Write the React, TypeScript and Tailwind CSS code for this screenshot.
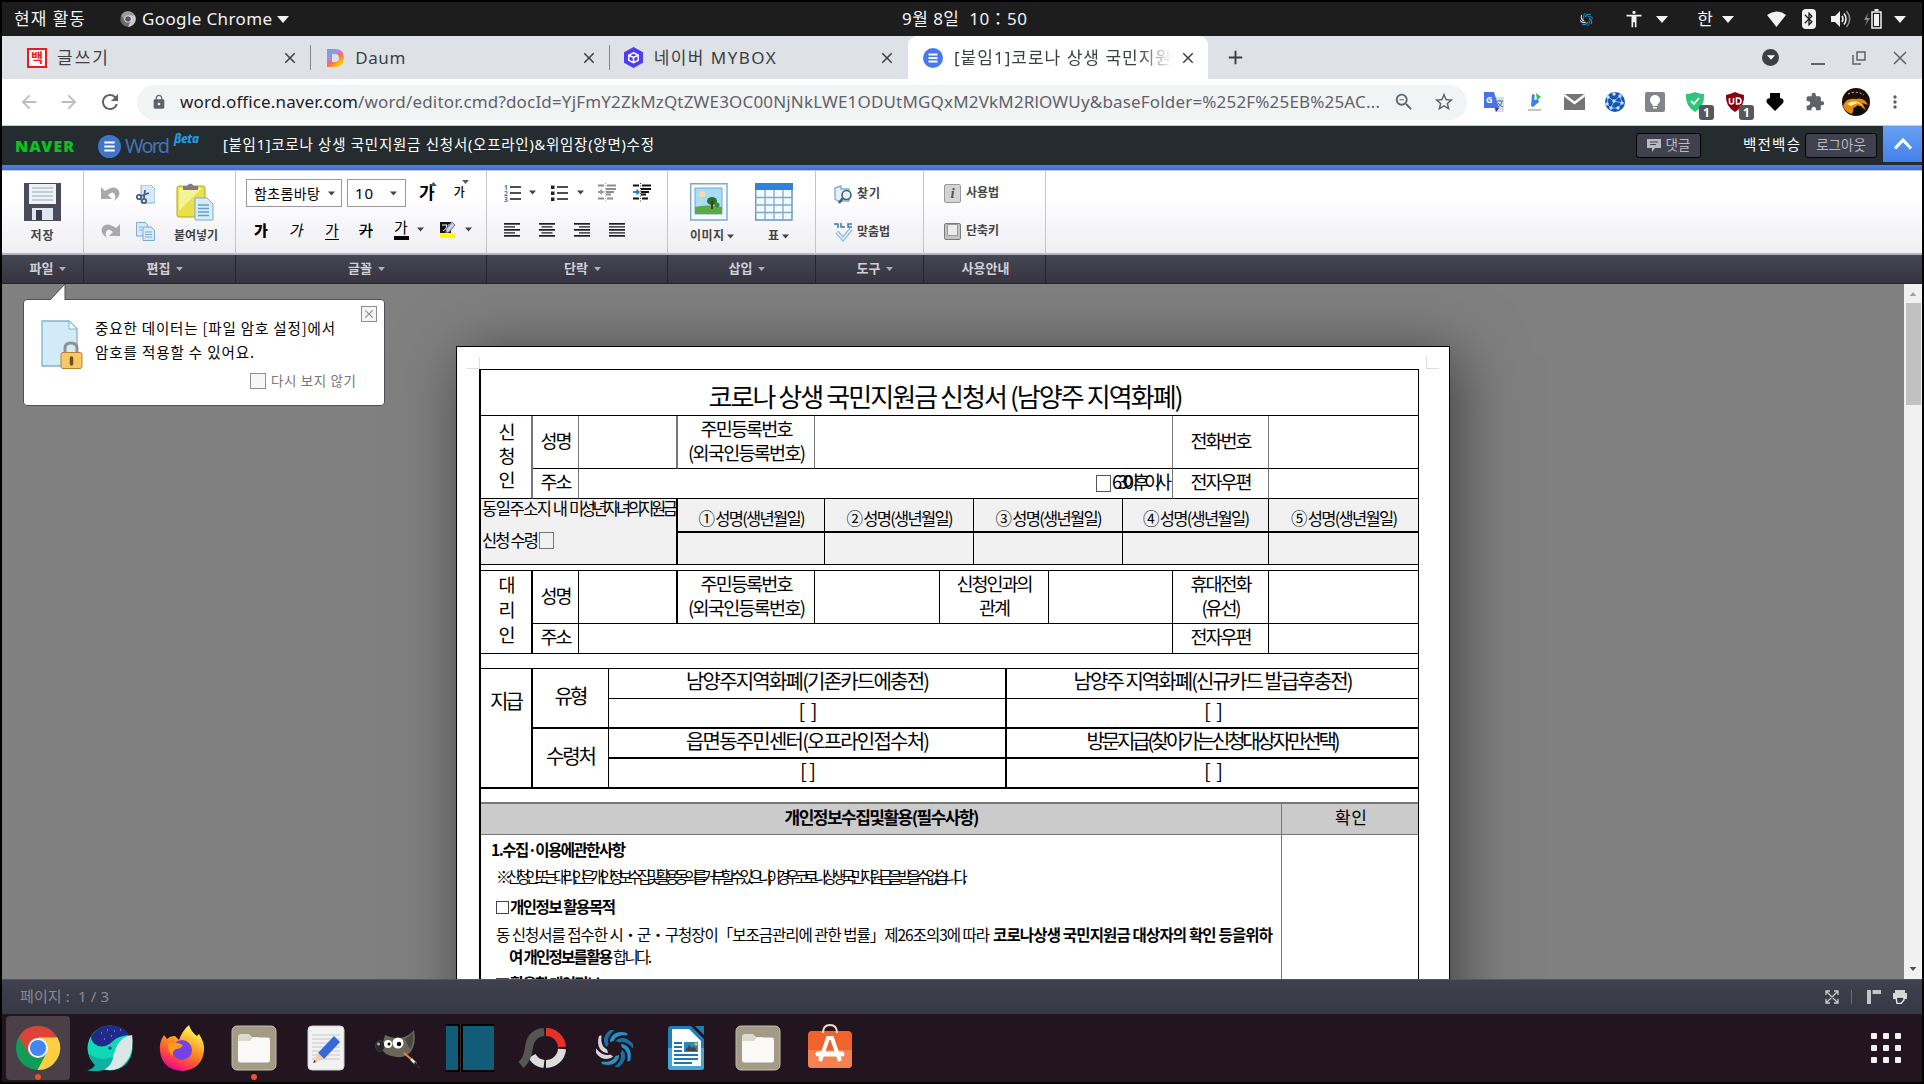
import { useLayoutEffect, useRef, useState } from "react";
import type { ReactNode } from "react";
import {
  MdArrowBack,
  MdArrowForward,
  MdRefresh,
  MdLock,
  MdStarBorder,
  MdExtension,
  MdMoreVert,
  MdBluetooth,
  MdClose,
  MdAdd,
  MdAccessibility,
  MdZoomOut,
} from "react-icons/md";

// Text squeezed or stretched to a given width, like a justified word processor line
function Fit({ w, children, className = "" }: { w: number; children: string; className?: string }) {
  const ref = useRef<HTMLSpanElement>(null);
  const [spacing, setSpacing] = useState(0);

  useLayoutEffect(() => {
    const el = ref.current;
    if (!el) return;
    el.style.letterSpacing = "0px";
    const natural = el.getBoundingClientRect().width;
    const next = (w - natural) / Math.max(1, children.length - 1);
    el.style.letterSpacing = next + "px";
    setSpacing(next);
  }, [w, children]);

  return (
    <span className={`inline-block shrink-0 whitespace-pre ${className}`} style={{ width: w }}>
      <span ref={ref} className="inline-block" style={{ letterSpacing: spacing }}>
        {children}
      </span>
    </span>
  );
}

function Caret({ className = "" }: { className?: string }) {
  return (
    <svg viewBox="0 0 12 7" className={`shrink-0 ${className}`}>
      <path d="M0 0H12L6 7Z" fill="currentColor" />
    </svg>
  );
}

function ChromeGlyph({ gray = false, className = "" }: { gray?: boolean; className?: string }) {
  const c = gray ? ["#9b9b9b", "#6b6b6b", "#c9c9c9", "#555"] : ["#db4437", "#0f9d58", "#ffcd40", "#4285f4"];
  return (
    <svg viewBox="0 0 48 48" className={className}>
      <circle cx="24" cy="24" r="23" fill={c[1]} />
      <path d="M24 24L4 12.500A23 23 0 0 1 44 13H24Z" fill={c[0]} />
      <path d="M24 13H44.300A23 23 0 0 1 23.500 47L33 29Z" fill={c[2]} />
      <path d="M4 12.500L14 30L24 13Z" fill={c[0]} />
      <circle cx="24" cy="24" r="10.500" fill="#f1f1f1" />
      <circle cx="24" cy="24" r="8.400" fill={c[3]} />
    </svg>
  );
}

function Swirl({ className = "" }: { className?: string }) {
  return (
    <svg viewBox="0 0 40 40" className={className}>
      {[0, 45, 90, 135, 180, 225, 270, 315].map((a) => (
        <path
          key={a}
          d="M15 13C15 6 22 0 33 3C34 4 34 5 34 6C27 5 21 7 19 12Z"
          fill={a >= 225 && a <= 270 ? "#d5d5da" : a % 90 ? "#1b6f9f" : "#2a8fc4"}
          transform={`rotate(${a} 20 20)`}
        />
      ))}
    </svg>
  );
}

function TopBar() {
  return (
    <div className="flex h-[34px] items-center bg-[#1d1d1d] text-[18px] text-[#f2f2f2]">
      <Fit w={71} className="ml-[12px] text-[17px]">현재 활동</Fit>
      <ChromeGlyph gray className="ml-[35px] h-[16px] w-[16px]" />
      <Fit w={130} className="ml-[6px] text-[17px]">Google Chrome</Fit>
      <Caret className="ml-[5px] h-[7px] w-[12px]" />
      <Fit w={125} className="ml-[613px] text-[17px]">9월 8일  10：50</Fit>
      <div className="flex-1" />
      <Swirl className="mr-[31px] h-[13px] w-[13px]" />
      <MdAccessibility className="mr-[12px] h-[20px] w-[20px]" />
      <Caret className="mr-[29px] h-[7px] w-[12px]" />
      <span className="mr-[9px] text-[17px]">한</span>
      <Caret className="mr-[33px] h-[7px] w-[12px]" />
      <svg viewBox="0 0 19 16" className="mr-[16px] h-[16px] w-[19px]">
        <path d="M0 4Q9.500 -3 19 4L9.500 16Z" fill="#f2f2f2" />
      </svg>
      <span className="mr-[15px] flex h-[20px] w-[14px] items-center justify-center rounded-sm bg-[#f2f2f2] text-[#1d1d1d]">
        <MdBluetooth className="h-[16px] w-[16px] shrink-0" />
      </span>
      <svg viewBox="0 0 20 18" className="mr-[13px] h-[18px] w-[20px]" fill="none" stroke="#f2f2f2" strokeWidth="1.600">
        <path d="M0 6H4L9 1V17L4 12H0Z" fill="#f2f2f2" stroke="none" />
        <path d="M11 6Q13 9 11 12M13 3.500Q17 9 13 14.500" />
        <path d="M15.500 1Q22 9 15.500 17" stroke="#8a8a8a" />
      </svg>
      <svg viewBox="0 0 18 20" className="mr-[12px] h-[20px] w-[18px]">
        <path d="M4 4L0 11H3L1 17L6 9H3Z" fill="#8a8a8a" />
        <path d="M8 3H17V19H8Z" fill="none" stroke="#f2f2f2" strokeWidth="1.500" />
        <path d="M10 5H15V17H10ZM10.500 0H14.500V2H10.500Z" fill="#f2f2f2" />
      </svg>
      <Caret className="mr-[16px] h-[7px] w-[12px]" />
    </div>
  );
}

function DocGlyph({ className = "" }: { className?: string }) {
  return (
    <svg viewBox="0 0 20 20" className={className}>
      <circle cx="10" cy="10" r="10" fill="currentColor" />
      <path d="M5.500 6.500H14.500M5.500 10H14.500M5.500 13.500H14.500" stroke="#fff" strokeWidth="1.800" />
    </svg>
  );
}

function Tab({ icon, children, sep }: { icon: ReactNode; children: ReactNode; sep?: boolean }) {
  return (
    <div className="flex h-full w-[299px] items-center pl-[14px] text-[#3c4043]">
      <span className="flex w-[20px] justify-center">{icon}</span>
      <span className="ml-[10px] flex-1">{children}</span>
      <MdClose className="mr-[11px] h-[18px] w-[18px] text-[#3c4043]" />
      <span className={`h-[25px] w-px ${sep ? "bg-[#85888d]" : ""}`} />
    </div>
  );
}

function TabStrip() {
  return (
    <div className="flex h-[43px] items-center bg-[#dee1e6] text-[17px]">
      <div className="flex h-full w-[906px] pl-[11px]">
        <Tab
          sep
          icon={
            <span className="flex h-[20px] w-[20px] items-center justify-center border-2 border-[#f01818] bg-white text-[13px] leading-none font-bold text-[#f01818]">
              백
            </span>
          }
        >
          <Fit w={51}>글쓰기</Fit>
        </Tab>
        <Tab
          sep
          icon={
            <svg viewBox="0 0 17 18" className="h-[18px] w-[17px]">
              <defs>
                <linearGradient id="daum" x1="0" y1="0" x2="0.800" y2="1">
                  <stop offset="0" stopColor="#3fb6f5" />
                  <stop offset="0.350" stopColor="#a88be8" />
                  <stop offset="0.600" stopColor="#ff6a5c" />
                  <stop offset="0.850" stopColor="#ffc400" />
                </linearGradient>
              </defs>
              <path d="M0 0H8Q17 0 17 9Q17 18 8 18H0Z" fill="url(#daum)" />
              <path d="M5 5H8Q12 5 12 9Q12 13 8 13H5Z" fill="#dee1e6" />
            </svg>
          }
        >
          <Fit w={50}>Daum</Fit>
        </Tab>
        <Tab
          icon={
            <svg viewBox="0 0 20 22" className="h-[21px] w-[19px]">
              <path d="M10 0L20 5.500V16.500L10 22L0 16.500V5.500Z" fill="#4f3df5" />
              <path d="M10 6L15 8.500V14L10 16.500L5 14V8.500ZM5 8.500L10 11L15 8.500M10 11V16.500" fill="none" stroke="#fff" strokeWidth="1.600" />
            </svg>
          }
        >
          <Fit w={122}>네이버 MYBOX</Fit>
        </Tab>
      </div>
      <div className="flex h-full w-[300px] items-center rounded-t-[9px] bg-white pl-[15px] text-[#3c4043]">
        <DocGlyph className="h-[20px] w-[20px] text-[#4678f0]" />
        <span className="ml-[11px] w-[218px] mask-r-from-85%">
          <Fit w={217}>[붙임1]코로나 상생 국민지원</Fit>
        </span>
        <MdClose className="ml-[7px] h-[18px] w-[18px]" />
      </div>
      <MdAdd className="ml-[16px] h-[23px] w-[23px] text-[#3c4043]" />
      <div className="flex-1" />
      <span className="mr-[32px] flex h-[17px] w-[17px] items-center justify-center rounded-full bg-[#3c4043] text-white">
        <Caret className="h-[5px] w-[8px]" />
      </span>
      <span className="mt-[12px] mr-[27px] h-[2px] w-[14px] bg-[#5f6368]" />
      <svg viewBox="0 0 14 14" className="mr-[27px] h-[14px] w-[14px]" fill="none" stroke="#5f6368" strokeWidth="1.500">
        <path d="M5 1H13V9H5ZM1 4V13H9" />
      </svg>
      <svg viewBox="0 0 14 14" className="mr-[15px] h-[14px] w-[14px]" stroke="#5f6368" strokeWidth="1.500">
        <path d="M1 1L13 13M13 1L1 13" />
      </svg>
    </div>
  );
}

function CountBadge() {
  return (
    <span className="absolute -right-[9px] -bottom-[8px] flex h-[15px] w-[15px] items-center justify-center rounded-[3px] bg-[#55595c] text-[12px] leading-none font-bold text-white">
      1
    </span>
  );
}

function AddressBar() {
  return (
    <div className="flex h-[47px] items-center border-b border-[#c9cccf] bg-white text-[#5f6368]">
      <MdArrowBack className="ml-[16px] h-[22px] w-[22px] text-[#babcbe]" />
      <MdArrowForward className="ml-[18px] h-[22px] w-[22px] text-[#babcbe]" />
      <MdRefresh className="ml-[18px] h-[24px] w-[24px]" />
      <div className="ml-[15px] flex h-[35px] w-[1330px] items-center rounded-full bg-[#f1f3f4] text-[17px]">
        <MdLock className="ml-[14px] h-[16px] w-[16px]" />
        <Fit w={178} className="ml-[13px] text-[#202124]">word.office.naver.com</Fit>
        <Fit w={1022}>/word/editor.cmd?docId=YjFmY2ZkMzQtZWE3OC00NjNkLWE1ODUtMGQxM2VkM2RlOWUy&baseFolder=%252F%25EB%25AC...</Fit>
        <MdZoomOut className="ml-[13px] h-[22px] w-[22px]" />
        <MdStarBorder className="ml-[18px] h-[22px] w-[22px]" />
      </div>
      <div className="ml-[17px] flex items-center gap-[20px]">
        <svg viewBox="0 0 20 20" className="h-[20px] w-[20px]">
          <path d="M7 5H20V20H11Z" fill="#dadce0" />
          <path d="M0 0H10L15 16H0Z" fill="#4a72e8" />
          <path d="M11 16H15L12 20Z" fill="#3b27b0" />
          <path d="M13 9H19M16 8V9M14 15Q18 13 18 9M14 11Q16 14 19 15" stroke="#4b7aa0" fill="none" />
          <text x="2" y="11" fontSize="9" fontWeight="700" fill="#fff">G</text>
        </svg>
        <svg viewBox="0 0 20 20" className="h-[20px] w-[20px]">
          <path d="M8 2L11 3L10 8L14 7L15 10L9 15L7 14Z" fill="#3f7df0" />
          <path d="M12 1L17 5L13 8Z" fill="#2dbd4c" />
          <path d="M4 18H17" stroke="#c4c4c4" strokeWidth="2" />
        </svg>
        <svg viewBox="0 0 21 16" className="h-[16px] w-[21px]">
          <path d="M0 0H21V16H0Z" fill="#757575" />
          <path d="M0 1L10.500 9L21 1" fill="none" stroke="#fff" strokeWidth="2.500" />
        </svg>
        <svg viewBox="0 0 20 20" className="h-[20px] w-[20px]">
          <circle cx="10" cy="10" r="10" fill="#2350b0" />
          <path d="M3 5L9 9L15 4L17 11L9 9L6 16L13 16L17 11M3 5L2 12L6 16" stroke="#4fc8f5" fill="none" />
          {[[3, 5], [9, 9], [15, 4], [17, 11], [6, 16], [13, 16], [2, 12], [9, 2]].map(([x, y]) => (
            <circle key={`${x}-${y}`} cx={x} cy={y} r="1.700" fill="#b9e8ff" />
          ))}
        </svg>
        <span className="flex h-[20px] w-[20px] items-center justify-center rounded-[2px] bg-[#80868b]">
          <svg viewBox="0 0 10 14" className="h-[14px] w-[10px]" fill="#fff">
            <circle cx="5" cy="5" r="5" />
            <path d="M2.500 8H7.500V11H2.500ZM3 12H7V13.500H3Z" />
          </svg>
        </span>
        <span className="relative h-[20px] w-[20px]">
          <svg viewBox="0 0 20 20" className="h-[20px] w-[20px]">
            <path d="M1 2Q6 2 10 0Q14 2 19 2Q20 14 10 20Q0 14 1 2Z" fill="#2fc57a" />
            <path d="M6 9L9 12L14 6" stroke="#fff" strokeWidth="1.800" fill="none" />
          </svg>
          <CountBadge />
        </span>
        <span className="relative h-[20px] w-[20px]">
          <svg viewBox="0 0 20 20" className="h-[20px] w-[20px]">
            <path d="M1 3Q6 2 10 0Q14 2 19 3Q20 14 10 20Q0 14 1 3Z" fill="#8a0010" />
            <path d="M4.500 6V10Q4.500 12 6.500 12Q8.500 12 8.500 10V6M11.500 6V12H13Q16 12 16 9Q16 6 13 6Z" stroke="#fff" strokeWidth="1.600" fill="none" />
          </svg>
          <CountBadge />
        </span>
        <svg viewBox="0 0 20 20" className="h-[20px] w-[20px]">
          <path d="M5 1H15V6Q20 7 18 11L10 19L2 11Q0 7 5 6Z" fill="#000" />
        </svg>
        <MdExtension className="h-[22px] w-[20px]" />
        <svg viewBox="0 0 28 28" className="-mx-[3px] h-[28px] w-[28px]">
          <circle cx="14" cy="14" r="14" fill="#1b0f06" />
          <path d="M1 18Q4 9 14 11Q22 9 26 17L20 15L24 22L16 17L12 20L10 26Q3 24 1 18Z" fill="#e88a10" />
          <path d="M5 16Q10 12 16 14L22 18L15 15L9 18Z" fill="#fff19a" />
          <path d="M6 6Q14 2 22 7" stroke="#d8d8d8" strokeDasharray="2 2" fill="none" />
          <path d="M11 20L19 18L22 24L14 27Z" fill="#0a0a0a" />
        </svg>
        <MdMoreVert className="-ml-[2px] h-[24px] w-[20px]" />
      </div>
    </div>
  );
}

function NaverHeader() {
  return (
    <>
      <div className="flex h-[39px] items-center bg-[#252c2f]">
        <Fit w={59} className="ml-[13px] text-[16px] font-black text-[#06c51c]">NAVER</Fit>
        <DocGlyph className="mt-[1px] ml-[24px] h-[23px] w-[23px] text-[#4274c8]" />
        <Fit w={45} className="ml-[4px] text-[20px] text-[#4472b8]">Word</Fit>
        <Fit w={25} className="-mt-[14px] ml-[4px] text-[12px] font-bold text-[#1ea2ea] italic">βeta</Fit>
        <Fit w={431} className="-mt-[2px] ml-[24px] text-[14.5px] text-white">[붙임1]코로나 상생 국민지원금 신청서(오프라인)&위임장(양면)수정</Fit>
        <div className="flex-1" />
        <span className="mr-[42px] flex h-[25px] w-[65px] items-center justify-center gap-[5px] rounded-[3px] border border-black bg-[#3f424e] text-[13.5px] text-[#b9babf]">
          <svg viewBox="0 0 14 13" className="h-[13px] w-[14px]">
            <path d="M0 0H14V9H8L5 13V9H0Z" fill="#b9babf" />
            <path d="M3 3H11M3 5.500H9" stroke="#3f424e" />
          </svg>
          댓글
        </span>
        <Fit w={57} className="-mt-[2px] text-[14.5px] text-white">백전백승</Fit>
        <span className="mr-[6px] ml-[5px] flex h-[25px] w-[72px] items-center justify-center rounded-[3px] border border-black bg-[#3f424e] text-[13.5px] text-[#b9babf]">
          로그아웃
        </span>
        <span className="mb-[3px] flex h-[36px] w-[39px] items-center justify-center bg-linear-to-b from-[#66a0f4] to-[#4481ea]">
          <svg viewBox="0 0 20 12" className="h-[12px] w-[20px]">
            <path d="M2 10.500L10 2L18 10.500" fill="none" stroke="#fff" strokeWidth="3" />
          </svg>
        </span>
      </div>
      <div className="h-[6px] border-b border-[#c4ccdc] bg-linear-to-b from-[#4b83ec] to-[#3d70cf]" />
    </>
  );
}

function Lines({ widths, align = "left" }: { widths: number[]; align?: "left" | "center" | "right" }) {
  return (
    <svg viewBox="0 0 16 16" className="h-[16px] w-[16px] shrink-0">
      {widths.map((w, i) => (
        <rect
          key={i}
          x={align === "left" ? 0 : align === "right" ? 16 - w : (16 - w) / 2}
          y={1 + i * 3}
          width={w}
          height="1.700"
          fill={i % 2 ? "#555" : "#1c1c1c"}
        />
      ))}
    </svg>
  );
}

function ListGlyph({ numbered = false }: { numbered?: boolean }) {
  return (
    <svg viewBox="0 0 17 18" className="h-[18px] w-[17px]">
      {[3, 9, 15].map((y, i) => (
        <g key={y}>
          <path d={`M6 ${y}H17`} stroke="#222" strokeWidth="1.600" />
          {numbered ? (
            <text x="0" y={y + 2.500} fontSize="6.500" fontWeight="700" fill="#1878c8">{i + 1}</text>
          ) : (
            <path d={`M0 ${y - 1.500}H3.500V${y + 2}H0Z`} fill="#222" />
          )}
        </g>
      ))}
    </svg>
  );
}

function IndentGlyph({ out = false }: { out?: boolean }) {
  return (
    <svg viewBox="0 0 18 19" className="h-[19px] w-[18px]">
      <path d="M0 2.500H6M9 2.500H18M8 6H18M8 9H16M8 11.500H13M0 15.500H6M9 15.500H15" stroke={out ? "#8c8c8c" : "#111"} strokeWidth="1.900" />
      <path d="M7.500 0V19" stroke={out ? "#aaa" : "#444"} strokeDasharray="1 1.500" />
      <path d={out ? "M0 9L4 6V12Z" : "M7 9L3.500 5.500V12.500Z"} fill={out ? "#999" : "#1878d8"} />
      <path d="M0 9H6" stroke={out ? "#999" : "#1878d8"} strokeWidth="1.800" />
    </svg>
  );
}

function Group({ w, label, caret = true, children }: { w: string; label: string; caret?: boolean; children: ReactNode }) {
  return (
    <div className={`${w} shrink-0`}>
      <div className="h-[83px] border-r border-[#c4c4cc]">{children}</div>
      <div
        className={`mt-px flex h-[29px] items-center justify-center gap-[6px] border-r border-[#25242d] pb-px text-[13px] font-bold text-[#d0d0d6] ${caret ? "pl-[11px]" : "pl-[2px]"}`}
      >
        {label}
        {caret && <Caret className="h-[4px] w-[7px] text-[#b0b0b8]" />}
      </div>
    </div>
  );
}

const ga = "flex h-[20px] w-[22px] items-center justify-center text-[15px] leading-none text-black";

function Ribbon() {
  return (
    <div className="flex h-[113px] bg-[linear-gradient(to_bottom,#fff_0,#fff_25px,#eeeef4_82px,#b4b4be_82px,#b4b4be_84px,#464553_84px,#35343f_112px,#24232c_112px)] text-[12px] font-bold text-[#444]">
      <Group w="w-[82px]" label="파일">
        <div className="flex flex-col items-center pt-[12px] pr-px">
          <svg viewBox="0 0 37 38" className="h-[38px] w-[37px]">
            <path d="M0 0H37V38H0Z" fill="#4a4a5a" />
            <path d="M5 1H32V21H5Z" fill="#eef2f5" />
            <path d="M8 5H29M8 9H29M8 13H29M8 17H29" stroke="#b5c4cc" strokeWidth="1.500" />
            <path d="M8 25H29V37H8Z" fill="#dfe6f0" />
            <path d="M12 27H18V37H12Z" fill="#3a3a48" />
          </svg>
          <Fit w={23} className="mt-[5px] leading-[20px]">저장</Fit>
        </div>
      </Group>
      <Group w="w-[152px]" label="편집">
        <div className="flex pt-[12px] pl-[17px]">
          <div className="flex w-[19px] flex-col gap-[22px] pt-[3px] text-[#a9a9ad]">
            <svg viewBox="0 0 19 15" className="h-[15px] w-[19px]">
              <path d="M0 1V13H11L7 9Q12 4 14 9Q15 12 13 15Q20 10 18 5Q14 -2 4 5Z" fill="currentColor" />
            </svg>
            <svg viewBox="0 0 19 15" className="h-[15px] w-[19px] -scale-x-100">
              <path d="M0 1V13H11L7 9Q12 4 14 9Q15 12 13 15Q20 10 18 5Q14 -2 4 5Z" fill="currentColor" />
            </svg>
          </div>
          <div className="ml-[16px] flex w-[19px] flex-col gap-[18px] pt-[2px]">
            <svg viewBox="0 0 19 19" className="h-[19px] w-[19px]">
              <path d="M5 0H15L19 4V18H5Z" fill="#d5eafa" stroke="#8ab3d3" />
              <g fill="none" stroke="#46607c" strokeWidth="1.800">
                <circle cx="3" cy="12" r="2.200" />
                <circle cx="8" cy="16" r="2.200" />
                <path d="M5 11L13 8M8 13L9 5" />
              </g>
            </svg>
            <svg viewBox="0 0 19 19" className="h-[19px] w-[19px]" fill="#d5eafa" stroke="#7fabd0">
              <path d="M.5 .5H9L12 3V14H.5Z" />
              <path d="M7 5H15L18.500 8V18.500H7Z" />
              <path d="M9 10H16M9 12.500H16M9 15H16M3 5H6M3 8H6" />
            </svg>
          </div>
          <div className="ml-[19px] flex w-[44px] flex-col items-center">
            <svg viewBox="0 0 38 38" className="-ml-[2px] h-[38px] w-[38px]">
              <rect x="1" y="3" width="28" height="31" rx="2" fill="#e8e04a" stroke="#b3a52a" />
              <path d="M3 5L26 5L3 28Z" fill="#f6f29a" />
              <path d="M7 3H11Q14 -2 18 3H22V7H7Z" fill="#7d7d80" />
              <path d="M19 15H31L37 21V37H19Z" fill="#d8edfa" stroke="#7fabd0" />
              <path d="M22 22H33M22 25.500H33M22 29H33M22 32.500H33" stroke="#6a9cc8" strokeWidth="1.500" />
            </svg>
            <Fit w={44} className="mt-[5px] leading-[20px]">붙여넣기</Fit>
          </div>
        </div>
      </Group>
      <Group w="w-[251px]" label="글꼴">
        <div className="flex items-center pt-[8px] pl-[10px] text-black">
          <span className="flex h-[28px] w-[96px] items-center border border-[#98989e] bg-white pl-[7px] text-[14px] font-normal">
            <Fit w={66}>함초롬바탕</Fit>
            <Caret className="ml-[8px] h-[5px] w-[7px] text-[#444]" />
          </span>
          <span className="ml-[5px] flex h-[28px] w-[59px] items-center justify-between border border-[#98989e] bg-white pr-[8px] pl-[7px] text-[15px] font-normal">
            <Fit w={18}>10</Fit>
            <Caret className="h-[5px] w-[7px] text-[#444]" />
          </span>
          <span className="ml-[13px] flex items-start text-[17px] leading-[18px]">
            가<Caret className="-mt-[2px] -ml-[5px] h-[4px] w-[7px] rotate-180 text-[#555]" />
          </span>
          <span className="ml-[17px] flex items-start text-[12px] leading-[22px] font-medium">
            가<Caret className="-mt-[2px] -ml-[3px] h-[4px] w-[7px] text-[#555]" />
          </span>
        </div>
        <div className="flex pt-[13px] pl-[14px] font-medium">
          <span className={`${ga} font-black`}>가</span>
          <span className={`${ga} ml-[14px] -skew-x-12 font-normal`}>가</span>
          <span className={`${ga} ml-[13px] font-normal underline underline-offset-3`}>가</span>
          <span className={`${ga} ml-[12px] line-through`}>가</span>
          <span className={`${ga} ml-[13px] flex-col font-normal`}>
            가<span className="mt-[1px] h-[4px] w-[15px] shrink-0 bg-black" />
          </span>
          <Caret className="mt-[7px] ml-[5px] h-[5px] w-[7px] text-[#444]" />
          <svg viewBox="0 0 16 17" className="mt-[1px] ml-[16px] h-[17px] w-[16px]">
            <path d="M0 1H11V12H0Z" fill="#111118" />
            <path d="M2 4H7Q7 8 3 10M9 3V11" stroke="#fff" fill="none" />
            <path d="M6 8L12 1L15 4L9 11L6 12Z" fill="#c8cce0" stroke="#6a7088" />
            <path d="M0 12H15V17H0Z" fill="#ff0" />
          </svg>
          <Caret className="mt-[7px] ml-[9px] h-[5px] w-[7px] text-[#444]" />
        </div>
      </Group>
      <Group w="w-[181px]" label="단락">
        <div className="flex items-center pt-[12px] pl-[17px]">
          <ListGlyph numbered />
          <Caret className="ml-[8px] h-[5px] w-[7px]" />
          <span className="w-[15px]" />
          <ListGlyph />
          <Caret className="ml-[9px] h-[5px] w-[7px]" />
          <span className="w-[14px]" />
          <IndentGlyph out />
          <span className="w-[17px]" />
          <IndentGlyph />
        </div>
        <div className="flex gap-[19px] pt-[20px] pl-[17px]">
          <Lines widths={[16, 11, 16, 11, 16]} />
          <Lines widths={[16, 11, 16, 11, 16]} align="center" />
          <Lines widths={[16, 11, 16, 11, 16]} align="right" />
          <Lines widths={[16, 16, 16, 16, 16]} />
        </div>
      </Group>
      <Group w="w-[148px]" label="삽입">
        <div className="flex pt-[12px] pl-[22px]">
          <div className="flex w-[44px] flex-col">
            <svg viewBox="0 0 38 38" className="h-[38px] w-[38px]">
              <path d="M.7 .7H37V37H.7Z" fill="#f5fbff" stroke="#7fa8cc" strokeWidth="1.400" />
              <path d="M5 5H32V31H5Z" fill="#a9dcf6" stroke="#7fa8cc" />
              <circle cx="12" cy="11" r="3" fill="#ffd9a0" />
              <path d="M5 24Q16 21 32 24V31H5Z" fill="#58ab45" />
              <ellipse cx="22" cy="18" rx="5" ry="4" fill="#2d6f22" />
              <circle cx="27" cy="22" r="2.500" fill="#3a8a2c" />
              <path d="M21 18H23V26H21Z" fill="#4a3a1a" />
            </svg>
            <span className="mt-[5px] flex items-center gap-[3px] leading-[20px]">
              <Fit w={34}>이미지</Fit>
              <Caret className="h-[5px] w-[7px]" />
            </span>
          </div>
          <div className="ml-[21px] flex w-[38px] flex-col items-center">
            <svg viewBox="0 0 38 38" className="h-[38px] w-[38px]">
              <path d="M.7 .7H37V37H.7Z" fill="#f2f9ff" stroke="#6a96c0" strokeWidth="1.400" />
              <path d="M0 0H38V7H0Z" fill="#2f82dc" />
              <path d="M0 14.500H38M0 22H38M0 29.500H38M10 7V38M19 7V38M28 7V38" stroke="#7fa8cc" strokeWidth="1.300" />
            </svg>
            <span className="mt-[5px] flex items-center gap-[3px] pl-[9px] leading-[20px]">
              표
              <Caret className="h-[5px] w-[7px]" />
            </span>
          </div>
        </div>
      </Group>
      <Group w="w-[108px]" label="도구">
        <div className="flex flex-col gap-[18px] pt-[13px] pl-[18px]">
          <span className="flex h-[20px] items-center gap-[4px]">
            <svg viewBox="0 0 19 19" className="h-[19px] w-[19px]" fill="#e2f1fb">
              <path d="M1 3L7 1V4H15V16H4L1 14Z" stroke="#7fb0d8" strokeWidth="1.400" />
              <circle cx="12.500" cy="10" r="4.500" stroke="#4a5a6a" strokeWidth="1.600" />
              <path d="M9 13L5 18" stroke="#4a5a6a" strokeWidth="2.500" />
            </svg>
            <Fit w={23}>찾기</Fit>
          </span>
          <span className="flex h-[20px] items-center gap-[4px]">
            <svg viewBox="0 0 19 19" className="h-[19px] w-[19px]" fill="none" stroke="#3f78a8" strokeWidth="1.500">
              <path d="M0 1H4V5M7 0V4H11M18 1H14V4H18" />
              <path d="M3 9L9 16L17 6" stroke="#8ab8dc" strokeWidth="4" />
              <path d="M3 9L9 16L17 6" stroke="#dceefa" strokeWidth="1.800" />
            </svg>
            <Fit w={33}>맞춤법</Fit>
          </span>
        </div>
      </Group>
      <Group w="w-[122px]" label="사용안내" caret={false}>
        <div className="flex flex-col gap-[18px] pt-[12px] pl-[20px]">
          <span className="flex h-[20px] items-center gap-[5px]">
            <span className="flex h-[19px] w-[17px] items-center justify-center rounded-[2px] border border-[#9a9a9a] bg-[#d4d4d4] font-[Liberation_Serif] text-[15px] leading-none font-bold text-[#555] italic">
              i
            </span>
            <Fit w={33}>사용법</Fit>
          </span>
          <span className="flex h-[20px] items-center gap-[5px]">
            <span className="flex h-[17px] w-[17px] items-start justify-center rounded-[2px] border border-[#7a7a7a] bg-[#c4c4c4]">
              <span className="h-[12px] w-[11px] border border-[#999] bg-[#ececec]" />
            </span>
            <Fit w={33}>단축키</Fit>
          </span>
        </div>
      </Group>
    </div>
  );
}

function Notice() {
  return (
    <div className="absolute top-[15px] left-[21px] h-[107px] w-[362px] rounded-[4px] border border-[#4f4e5c] bg-white text-[14.5px] text-black">
      <svg viewBox="0 0 16 17" className="absolute -top-[16px] left-[26px] h-[17px] w-[16px]">
        <path d="M0 16L15 0V17H0Z" fill="#fff" />
        <path d="M0 16L15 0V16" fill="none" stroke="#4f4e5c" />
      </svg>
      <span className="absolute top-[6px] right-[7px] flex h-[16px] w-[16px] items-center justify-center border border-[#8e8e8e] bg-[#f4f4f4] text-[#8e8e8e]">
        <MdClose className="h-[14px] w-[14px] shrink-0" />
      </span>
      <div className="flex pt-[17px] pl-[17px]">
        <svg viewBox="0 0 42 50" className="mt-[3px] h-[50px] w-[42px] shrink-0">
          <path d="M1 1H28L36 9V46H1Z" fill="#d3ebf8" stroke="#7fb2d2" strokeWidth="1.300" />
          <path d="M28 1V9H36Z" fill="#fff" stroke="#7fb2d2" />
          <path d="M24 33V28Q24 23 30 23Q36 23 36 28V33" fill="none" stroke="#909090" strokeWidth="3" />
          <rect x="20" y="32.500" width="21" height="16" rx="2" fill="#f7c868" stroke="#b7832f" />
          <path d="M30.500 38V44" stroke="#6b5020" strokeWidth="3.500" strokeLinecap="round" />
        </svg>
        <div className="-mt-px ml-[12px] leading-[24px]">
          <Fit w={240} className="block">중요한 데이터는 [파일 암호 설정]에서</Fit>
          <Fit w={159} className="block">암호를 적용할 수 있어요.</Fit>
        </div>
      </div>
      <div className="flex items-center pl-[226px] text-[13.5px] text-[#777]">
        <span className="mt-[2px] mr-[5px] h-[16px] w-[16px] border border-[#8e8e8e] bg-[#f7f7f7]" />
        <Fit w={85}>다시 보지 않기</Fit>
      </div>
    </div>
  );
}

// Form cell. Edges are right and bottom borders of the cell.
function Cell({ children, className = "" }: { children?: ReactNode; className?: string }) {
  return (
    <div className={`flex flex-col items-center justify-center border-black ${className}`}>
      <div className="-mt-[5px] ml-[2px] flex flex-col items-center">{children}</div>
    </div>
  );
}

function FormPage() {
  return (
    <div className="mt-[62px] ml-[454px] h-[700px] w-[994px] border border-black bg-white pt-[22px] pl-[22px] text-black shadow-[8px_8px_60px_rgba(0,0,0,0.5)]">
      <div className="relative h-px w-[950px]">
        <span className="absolute -top-[12px] -left-[12px] h-[12px] w-[13px] border-r border-b border-[#ddd]" />
        <span className="absolute -top-[12px] left-[947px] h-[12px] w-[13px] border-b border-l border-[#ddd]" />
      </div>
      <div className="-mt-px w-[940px] border-t border-r border-l-2 border-black text-[18.5px] leading-[24px]">
        <Cell className="h-[46px] border-b pt-[11px] text-[26px]">
          <Fit w={475} className="-ml-[9px]">코로나 상생 국민지원금 신청서 (남양주 지역화폐)</Fit>
        </Cell>

        <div className="grid h-[83px] grid-cols-[52px_46px_99px_137px_358px_96px_149px] grid-rows-[53px_30px]">
          <Cell className="row-span-2 border-r-2 border-b border-r-[#777] leading-[24px]">
            <span>신</span>
            <span>청</span>
            <span>인</span>
          </Cell>
          <Cell className="border-r border-b border-r-[#777]">
            <Fit w={32}>성명</Fit>
          </Cell>
          <Cell className="border-r-2 border-b border-r-[#777]" />
          <Cell className="border-r border-b border-r-[#777]">
            <Fit w={93}>주민등록번호</Fit>
            <Fit w={118}>(외국인등록번호)</Fit>
          </Cell>
          <Cell className="border-r border-b border-r-[#777]" />
          <Cell className="border-r border-b border-r-[#777]">
            <Fit w={62}>전화번호</Fit>
          </Cell>
          <Cell className="border-b" />
          <Cell className="border-r border-b border-r-[#777]">
            <Fit w={32}>주소</Fit>
          </Cell>
          <div className="col-span-3 flex items-center justify-end border-r border-b border-black border-r-[#777] pb-[5px]">
            <span className="mt-[4px] mr-[1px] h-[17px] w-[15px] border border-[#555]" />
            <Fit w={22}>6.30</Fit>
            <Fit w={50} className="-ml-[12px]">이후이사</Fit>
          </div>
          <Cell className="border-r border-b border-r-[#777]">
            <Fit w={62}>전자우편</Fit>
          </Cell>
          <Cell className="border-b" />
        </div>

        <div className="grid h-[66px] grid-cols-[197px_147px_149px_149px_146px_149px] grid-rows-[34px_32px] bg-[#f1f1f1] text-[16.5px]">
          <div className="row-span-2 border-r-2 border-b border-black pl-px">
            <div className="-mt-[2px] flex h-[22px] items-center">
              <Fit w={86}>동일주소지 내</Fit>
              <Fit w={109} className="ml-px">미성년자녀의지원금</Fit>
            </div>
            <div className="mt-[10px] flex h-[22px] items-center">
              <Fit w={57}>신청 수령</Fit>
              <span className="h-[17px] w-[15px] border border-[#777]" />
            </div>
          </div>
          {["①", "②", "③", "④", "⑤"].map((n) => (
            <Cell key={n} className={`border-b-2 pt-[10px] ${n === "⑤" ? "" : "border-r"}`}>
              <Fit w={107}>{n + " 성명(생년월일)"}</Fit>
            </Cell>
          ))}
          <Cell className="border-r border-b" />
          <Cell className="border-r border-b" />
          <Cell className="border-r border-b" />
          <Cell className="border-r border-b" />
          <Cell className="border-b" />
        </div>

        <div className="h-[6px] border-b border-black" />

        <div className="grid h-[83px] grid-cols-[52px_46px_99px_137px_125px_109px_124px_96px_149px] grid-rows-[53px_30px]">
          <Cell className="row-span-2 border-r-2 border-b leading-[25px]">
            <span>대</span>
            <span>리</span>
            <span>인</span>
          </Cell>
          <Cell className="border-r border-b">
            <Fit w={32}>성명</Fit>
          </Cell>
          <Cell className="border-r-2 border-b" />
          <Cell className="border-r border-b">
            <Fit w={93}>주민등록번호</Fit>
            <Fit w={118}>(외국인등록번호)</Fit>
          </Cell>
          <Cell className="border-r border-b" />
          <Cell className="border-r border-b">
            <Fit w={77}>신청인과의</Fit>
            <Fit w={32}>관계</Fit>
          </Cell>
          <Cell className="border-r border-b" />
          <Cell className="border-r border-b">
            <Fit w={62}>휴대전화</Fit>
            <Fit w={40}>(유선)</Fit>
          </Cell>
          <Cell className="border-b" />
          <Cell className="border-r border-b">
            <Fit w={32}>주소</Fit>
          </Cell>
          <Cell className="col-span-5 border-r border-b" />
          <Cell className="border-r border-b">
            <Fit w={62}>전자우편</Fit>
          </Cell>
          <Cell className="border-b" />
        </div>

        <div className="h-[15px] border-b border-black" />

        <div className="grid h-[120px] grid-cols-[52px_76px_398px_411px] grid-rows-[30px_30px_30px_30px] text-[20px]">
          <Cell className="row-span-4 border-r-2 border-b-2 pb-[50px]">
            <Fit w={34}>지급</Fit>
          </Cell>
          <Cell className="row-span-2 border-r border-b-2">
            <Fit w={34}>유형</Fit>
          </Cell>
          <Cell className="border-r-2 border-b">
            <Fit w={244}>남양주지역화폐(기존카드에충전)</Fit>
          </Cell>
          <Cell className="border-b">
            <Fit w={280}>남양주 지역화폐(신규카드 발급후충전)</Fit>
          </Cell>
          <Cell className="border-r-2 border-b-2">
            <Fit w={19}>[ ]</Fit>
          </Cell>
          <Cell className="border-b-2">
            <Fit w={19}>[ ]</Fit>
          </Cell>
          <Cell className="row-span-2 border-r border-b-2">
            <Fit w={51}>수령처</Fit>
          </Cell>
          <Cell className="border-r-2 border-b-2">
            <Fit w={244}>읍면동주민센터(오프라인접수처)</Fit>
          </Cell>
          <Cell className="border-b-2">
            <Fit w={254}>방문지급(찾아가는신청대상자만선택)</Fit>
          </Cell>
          <Cell className="border-r-2 border-b-2">
            <Fit w={16}>[ ]</Fit>
          </Cell>
          <Cell className="border-b-2">
            <Fit w={19}>[ ]</Fit>
          </Cell>
        </div>

        <div className="h-[15px] border-b-2 border-[#777]" />

        <div className="grid grid-cols-[801px_136px] grid-rows-[31px_160px] text-[15.5px]">
          <Cell className="border-r border-b border-[#777]! bg-[#cbcbcb] text-[17px] font-bold">
            <Fit w={195}>개인정보수집및활용(필수사항)</Fit>
          </Cell>
          <Cell className="border-b border-[#777]! bg-[#cbcbcb] text-[17px]">
            <Fit w={32}>확인</Fit>
          </Cell>
          <div className="border-r border-[#777]">
            <div className="-mt-px flex h-[30px] items-center pl-[10px] font-bold">
              <Fit w={135}>1.수집·이용에관한사항</Fit>
            </div>
            <div className="flex h-[24px] items-center pl-[15px]">
              <Fit w={471}>※신청인또는대리인은개인정보수집및활용동의를거부할수있으나,이경우코로나상생국민지원금을받을수없습니다.</Fit>
            </div>
            <div className="mt-[2px] flex h-[32px] items-center pl-[15px] font-bold">
              <span className="mt-[2px] mr-[1px] h-[13px] w-[13px] border border-[#444]" />
              <Fit w={106}>개인정보 활용목적</Fit>
            </div>
            <div className="flex h-[24px] items-center pl-[15px]">
              <Fit w={494}>동 신청서를 접수한 시・군・구청장이「보조금관리에 관한 법률」제26조의3에 따라</Fit>
              <Fit w={280} className="ml-[3px] font-bold">코로나상생 국민지원금 대상자의 확인 등을위하</Fit>
            </div>
            <div className="flex h-[20px] items-center pl-[28px]">
              <Fit w={104} className="font-bold">여 개인정보를활용</Fit>
              <Fit w={39}>합니다.</Fit>
            </div>
            <div className="mt-[6px] flex h-[22px] items-center pl-[15px] font-bold">
              <span className="mt-[2px] mr-[1px] h-[13px] w-[13px] border border-[#444]" />
              <Fit w={91}>활용할 개인정보</Fit>
            </div>
          </div>
          <Cell />
        </div>
      </div>
    </div>
  );
}

function Workspace() {
  return (
    <div className="relative flex h-[695px] overflow-hidden bg-[#808080]">
      <FormPage />
      <Notice />
      <div className="relative ml-auto flex w-[18px] flex-col items-center bg-[#f1f1f1] pb-[8px]">
        <Caret className="mt-[8px] h-[4px] w-[8px] rotate-180 text-[#a3a3a3]" />
        <span className="mt-[7px] h-[102px] w-[15px] bg-[#c1c1c1]" />
        <Caret className="mt-auto h-[4px] w-[8px] text-[#505050]" />
      </div>
    </div>
  );
}

function StatusBar() {
  return (
    <div className="flex h-[35px] items-center border-t border-[#55545f] bg-linear-to-b from-[#41404e] to-[#363844] text-[15px] text-[#8a8a90]">
      <Fit w={89} className="-mt-[2px] ml-[18px]">페이지 :  1 / 3</Fit>
      <div className="flex-1" />
      <svg viewBox="0 0 14 14" className="mr-[12px] h-[14px] w-[14px]" fill="none" stroke="#c9c9cc" strokeWidth="1.300">
        <path d="M1 5V1H5M9 1H13V5M13 9V13H9M5 13H1V9M1 1L13 13M13 1L1 13" />
      </svg>
      <span className="mr-[15px] h-[14px] w-px bg-[#6a6a74]" />
      <svg viewBox="0 0 14 14" className="mr-[12px] h-[14px] w-[14px]">
        <path d="M0 0H4V14H0ZM5.500 0H14V4H5.500Z" fill="#c4c4c8" />
      </svg>
      <svg viewBox="0 0 14 14" className="mr-[15px] h-[14px] w-[14px]">
        <path d="M2 0H12V3H14V9H0V3H2Z" fill="#d6d6d8" />
        <path d="M3 7H11V10L8 13.500H4Z" fill="#383a46" stroke="#e8e8ea" strokeWidth="1.400" />
      </svg>
    </div>
  );
}

function FilesGlyph() {
  return (
    <svg viewBox="0 0 46 46" className="h-[46px] w-[46px]">
      <rect x="1" y="1" width="44" height="44" rx="5" fill="#a39b86" stroke="#c2bda8" />
      <path d="M7 12Q7 9 10 9H18L21 12H28V20H7Z" fill="#dcd8cb" />
      <rect x="7" y="12.500" width="32" height="25" rx="2.500" fill="#faf9f8" />
      <path d="M7 16H19L22 12H7Z" fill="#dcd8cb" />
    </svg>
  );
}

function DockItem({ children, active, running }: { children: ReactNode; active?: boolean; running?: boolean }) {
  return (
    <span className={`relative flex h-[64px] w-[64px] items-center justify-center rounded-[4px] ${active ? "bg-[#4b3f48]" : ""}`}>
      {children}
      {running && <span className="absolute bottom-0 h-[6px] w-[6px] rounded-full bg-[#e95420]" />}
    </span>
  );
}

function Dock() {
  return (
    <div className="flex h-[68px] items-center gap-[8px] bg-[#22151f] pl-[4px]">
      <DockItem active running>
        <ChromeGlyph className="h-[46px] w-[46px]" />
      </DockItem>
      <DockItem>
        <svg viewBox="0 0 46 46" className="h-[46px] w-[46px]">
          <circle cx="23" cy="23" r="22.500" fill="#0fd9b4" />
          <path d="M4 11Q12 0 23 0.500Q37 0 42 10Q31 11 26 16Q20 23 11 21Q4 18 4 11Z" fill="#1f2a8a" />
          <path d="M45 10Q48 30 35 41Q28 47 15 44Q24 40 27 29Q31 12 45 10Z" fill="#dbe6e8" />
          <path d="M1 28Q5 37 8 40Q6 44 0 45.500Q16 48 22 41Q26 36 26 32Q12 37 1 28Z" fill="#10b0a4" />
          <circle cx="23" cy="23" r="1.600" fill="#1f2a8a" />
          <path d="M14 8h1M20 5h1M27 6h1M17 14h1M33 5h1M24 11h1" stroke="#9fb4ff" strokeWidth="1.200" />
        </svg>
      </DockItem>
      <DockItem>
        <svg viewBox="0 0 46 46" className="h-[46px] w-[46px]">
          <defs>
            <linearGradient id="fox" x1="0.800" y1="0" x2="0.300" y2="1">
              <stop offset="0.100" stopColor="#fff44f" />
              <stop offset="0.500" stopColor="#ff8a1f" />
              <stop offset="0.800" stopColor="#ff3850" />
              <stop offset="1" stopColor="#e3009e" />
            </linearGradient>
          </defs>
          <path d="M5 10L8 14Q11 11 16 11L20 15Q23 6 30 0Q32 7 38 11L40 9Q46 18 45 26Q43 44 24 46Q3 45 1 26Q0 17 5 10Z" fill="url(#fox)" />
          <circle cx="23" cy="25" r="10" fill="#7542e5" />
          <path d="M9 19Q15 15 24 20Q22 24 17 24Q13 26 14 31Q8 26 9 19Z" fill="#ff9a1f" />
        </svg>
      </DockItem>
      <DockItem running>
        <FilesGlyph />
      </DockItem>
      <DockItem>
        <svg viewBox="0 0 38 46" className="h-[46px] w-[38px]">
          <rect x="1" y="1" width="36" height="44" rx="4" fill="#f2f2f2" stroke="#cfcfcf" />
          <path d="M5 10H33M5 14H33M5 18H33M5 22H33M5 26H33M5 30H33M5 34H33" stroke="#c6c6c6" />
          <path d="M27 11L33 17L17 34L11 28Z" fill="#3568d8" />
          <path d="M11 28L17 34L6 38Z" fill="#f3cfa6" />
          <path d="M7.500 35L9 37L6 38Z" fill="#333" />
        </svg>
      </DockItem>
      <DockItem>
        <svg viewBox="0 0 46 42" className="h-[42px] w-[46px]">
          <path d="M10 8Q20 13 29 10Q35 8 39 3Q42 17 35 26Q25 34 11 27L6 22Z" fill="#6c665a" />
          <path d="M30 12Q35 9 38 6Q39 15 35 22Z" fill="#4c463c" />
          <ellipse cx="5" cy="19" rx="4.500" ry="5.500" fill="#26282a" stroke="#555" strokeWidth="0.500" />
          <circle cx="3.500" cy="17" r="1.500" fill="#aaa" />
          <circle cx="13" cy="17" r="4" fill="#fff" />
          <circle cx="23" cy="16" r="5.500" fill="#fff" />
          <circle cx="14" cy="17" r="1.500" />
          <circle cx="24" cy="17" r="2.200" />
          <path d="M29 26L36 32" stroke="#e08a3a" strokeWidth="2.200" />
          <path d="M36 32L41 37" stroke="#e8e8e8" strokeWidth="2.500" />
          <path d="M40 35L45 41L39 38Z" fill="#111" stroke="#444" strokeWidth="0.600" />
        </svg>
      </DockItem>
      <DockItem>
        <span className="flex h-[48px] w-[48px] gap-[1px] bg-[#363036]">
          <span className="w-[14px] border-y-2 border-r-2 border-black bg-[#115c78]" />
          <span className="flex-1 border-y-2 border-l-2 border-black bg-[#115c78]" />
        </span>
      </DockItem>
      <DockItem>
        <svg viewBox="0 0 48 42" className="h-[42px] w-[48px]" fill="none" strokeWidth="8">
          <path d="M28 5A16 16 0 0 1 44 20" stroke="#e8302a" />
          <path d="M44 22A16 16 0 0 1 28 37M26 37A16 16 0 0 1 14 29" stroke="#dcdcdc" />
          <path d="M26 5Q13 6 11 20Q10 32 3 38" stroke="#555" />
        </svg>
      </DockItem>
      <DockItem>
        <Swirl className="h-[37px] w-[37px]" />
      </DockItem>
      <DockItem>
        <svg viewBox="0 0 38 46" className="h-[46px] w-[38px]">
          <path d="M4 1H24L37 14V42Q37 45 34 45H4Q1 45 1 42V4Q1 1 4 1Z" fill="#1f7fb4" />
          <path d="M28 1H37V10Z" fill="#1f7fb4" />
          <path d="M1 23H37V42Q37 45 34 45H4Q1 45 1 42Z" fill="#45a5d6" />
          <path d="M5 4H22L34 16V41H5Z" fill="#fff" />
          <path d="M7 18H15M7 22H15M7 26H15M7 30H31M7 34H31M7 38H25" stroke="#1878b0" strokeWidth="1.800" />
          <path d="M17 17H31V27H17Z" fill="#2c88bf" />
          <path d="M18 26L22 20L25 23L27 21L30 26Z" fill="#444" />
          <circle cx="29" cy="19" r="1.600" fill="#f5c02a" />
        </svg>
      </DockItem>
      <DockItem>
        <FilesGlyph />
      </DockItem>
      <DockItem>
        <svg viewBox="0 0 46 46" className="mb-[4px] h-[46px] w-[46px]">
          <rect x="1" y="8" width="44" height="37" rx="4" fill="#f0642c" />
          <path d="M1 27H45V41Q45 45 41 45H5Q1 45 1 41Z" fill="#f58250" />
          <path d="M16 10Q16 2 23 2Q30 2 30 10" stroke="#f4d9c0" strokeWidth="2" fill="none" />
          <path d="M13 38L21 15H25L33 38" stroke="#fff" strokeWidth="4" fill="none" />
          <path d="M11 31H35" stroke="#fff" strokeWidth="5" strokeLinecap="round" />
        </svg>
      </DockItem>
      <div className="mr-[21px] ml-auto grid grid-cols-3 gap-[6px]">
        {[...Array(9)].map((_, i) => (
          <span key={i} className="h-[6px] w-[6px] rounded-[1px] bg-[#f2f0f1]" />
        ))}
      </div>
    </div>
  );
}

export default function App() {
  return (
    <div className="h-[1084px] w-[1924px] overflow-hidden border-2 border-black bg-black font-['Noto_Sans','Noto_Sans_CJK_KR',sans-serif]">
      <TopBar />
      <TabStrip />
      <AddressBar />
      <NaverHeader />
      <Ribbon />
      <div className="font-['Noto_Sans_CJK_KR',sans-serif]">
        <Workspace />
      </div>
      <StatusBar />
      <Dock />
    </div>
  );
}
